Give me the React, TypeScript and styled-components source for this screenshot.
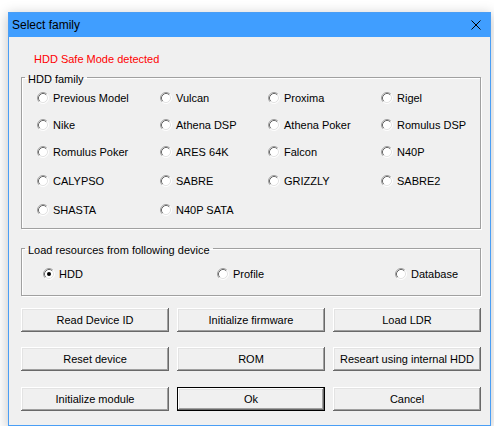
import React from "react";
import styled, { createGlobalStyle } from "styled-components";

const GlobalStyle = createGlobalStyle`
  body {
    margin: 0;
    background: #ffffff;
    font-family: "Liberation Sans", Arial, sans-serif;
    font-size: 11px;
    color: #000;
  }
`;

const Page = styled.div`
  padding: 12px 0 0 8px;
`;

const Window = styled.div`
  box-sizing: border-box;
  width: 483px;
  height: 414px;
  border: 1px solid #4a9ef5;
  background: #f0f0f0;
  box-shadow: 0 3px 12px 1px rgba(0, 0, 0, 0.22);
  display: flex;
  flex-direction: column;
`;

const TitleBar = styled.div`
  height: 24px;
  background: #409eff;
  display: flex;
  align-items: center;
  justify-content: space-between;
  padding: 0 9px 0 3px;
  font-size: 12px;
`;

const Client = styled.div`
  display: flex;
  flex-direction: column;
  padding: 0 9px 0 12px;
`;

const Warning = styled.div`
  margin: 16px 0 0 13px;
  line-height: 13px;
  color: #ff0000;
`;

const Group = styled.fieldset<{ $top: number }>`
  margin: ${(p) => p.$top}px 0 0 0;
  padding: ${(p) => (p.$top > 8 ? "4px 0 5px 3px" : "2px 0 4px 3px")};
  border: 1px solid #a0a0a0;
  box-shadow: 1px 1px 0 #ffffff, inset 1px 1px 0 #ffffff;
  min-width: 0;
`;

const Legend = styled.legend`
  padding: 0 3px;
  line-height: 12px;

  span {
    display: inline-block;
    transform: translateY(2px);
  }
`;

const FamilyGrid = styled.div`
  display: grid;
  margin-left: 12px;
  grid-template-columns: 123px 108px 113px 1fr;
  grid-template-rows: 26px 27px 28px 29px 29px;
  align-items: center;
`;

const SourceGrid = styled.div`
  display: grid;
  margin-left: 18px;
  grid-template-columns: 174px 178px 1fr;
  height: 32px;
  align-items: center;
`;

const RadioLabel = styled.label`
  display: flex;
  align-items: center;
  gap: 4px;
  white-space: nowrap;
`;

const ButtonGrid = styled.div`
  display: grid;
  grid-template-columns: repeat(3, 148px);
  grid-template-rows: 24px 24px 24px;
  column-gap: 8px;
  row-gap: 15.5px;
  margin-top: 11.5px;
`;

const Button = styled.button<{ $default?: boolean }>`
  box-sizing: border-box;
  font: inherit;
  color: #000;
  background: #f0f0f0;
  padding: 0;
  border: ${(p) => (p.$default ? "1px solid #000" : "none")};
  box-shadow: inset -1px -1px 0 #696969, inset 1px 1px 0 #ffffff,
    inset -2px -2px 0 #a0a0a0, inset 2px 2px 0 #e3e3e3;
`;

function RadioMark({ checked }: { checked?: boolean }) {
  return (
    <svg width="12" height="12" viewBox="0 0 12 12">
      <circle cx="6" cy="6" r="5" fill="#ffffff" />
      <path d="M2.11 9.89 A5.5 5.5 0 0 1 9.89 2.11" fill="none" stroke="#a0a0a0" />
      <path d="M2.82 9.18 A4.5 4.5 0 0 1 9.18 2.82" fill="none" stroke="#696969" />
      <path d="M9.89 2.11 A5.5 5.5 0 0 1 2.11 9.89" fill="none" stroke="#ffffff" />
      <path d="M9.18 2.82 A4.5 4.5 0 0 1 2.82 9.18" fill="none" stroke="#e3e3e3" />
      {checked && <circle cx="6" cy="6" r="2" fill="#000" />}
    </svg>
  );
}

function Radio({ label, checked }: { label: string; checked?: boolean }) {
  return (
    <RadioLabel>
      <RadioMark checked={checked} />
      {label}
    </RadioLabel>
  );
}

const families = [
  "Previous Model", "Vulcan", "Proxima", "Rigel",
  "Nike", "Athena DSP", "Athena Poker", "Romulus DSP",
  "Romulus Poker", "ARES 64K", "Falcon", "N40P",
  "CALYPSO", "SABRE", "GRIZZLY", "SABRE2",
  "SHASTA", "N40P SATA",
];

const buttons = [
  "Read Device ID", "Initialize firmware", "Load LDR",
  "Reset device", "ROM", "Researt using internal HDD",
  "Initialize module", "Ok", "Cancel",
];

export default function App() {
  return (
    <Page>
      <GlobalStyle />
      <Window>
        <TitleBar>
          <span>Select family</span>
          <svg width="10" height="10" viewBox="0 0 10 10">
            <path d="M0.5 0.5 L9.5 9.5 M9.5 0.5 L0.5 9.5" stroke="#000" strokeWidth="1" />
          </svg>
        </TitleBar>
        <Client>
          <Warning>HDD Safe Mode detected</Warning>
          <Group $top={5}>
            <Legend><span>HDD family</span></Legend>
            <FamilyGrid>
              {families.map((f) => (
                <Radio key={f} label={f} />
              ))}
            </FamilyGrid>
          </Group>
          <Group $top={13}>
            <Legend><span>Load resources from following device</span></Legend>
            <SourceGrid>
              <Radio label="HDD" checked />
              <Radio label="Profile" />
              <Radio label="Database" />
            </SourceGrid>
          </Group>
          <ButtonGrid>
            {buttons.map((b) => (
              <Button key={b} $default={b === "Ok"}>{b}</Button>
            ))}
          </ButtonGrid>
        </Client>
      </Window>
    </Page>
  );
}
